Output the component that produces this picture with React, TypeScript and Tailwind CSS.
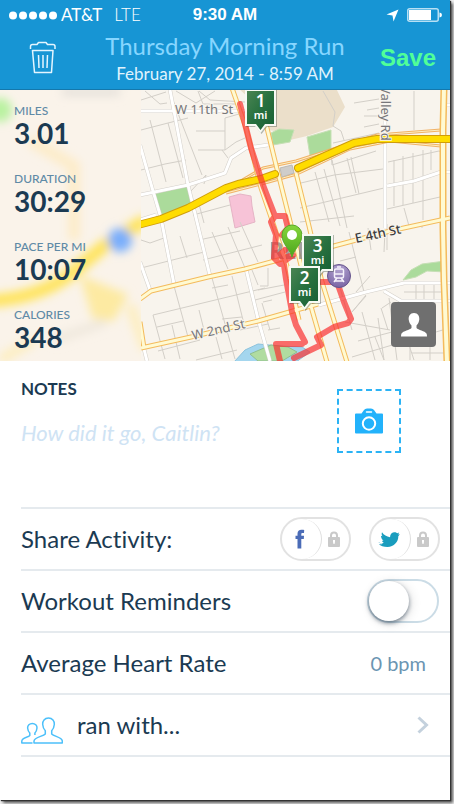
import React from 'react'

const stats = [
  { label: 'MILES', value: '3.01' },
  { label: 'DURATION', value: '30:29' },
  { label: 'PACE PER MI', value: '10:07' },
  { label: 'CALORIES', value: '348' },
]

// thin residential streets
const smallStreets =
  'M141 130L168 123L188 118M141 170L165 164L186 160M150 120L166 182M168 123L183 178M141 100L166 92M145 91L160 104L167 103M176 91L196 103L215 91M198 91L203 104L236 104M172 98L202 175M196 131H225M198 150H225V118M225 118L246 112M225 150L236 142L245 138M222 150L228 158M204 184L206 175L190 192M193 215L230 205M199 204L204 223M199 91L210 100L245 102' +
  'M141 240L150 243L164 238M141 268L204 252M180 236L187 258M212 232L228 269M199 240L240 231M203 260L262 245M228 227L245 268M240 222L258 262M212 288L228 285M153 315L265 288M174 286L188 337M153 315L165 359M157 327L183 321M158 351L200 340M172 325L180 359M199 310L204 330M212 278L235 359M232 276L244 324M222 319L242 317M258 290L284 285M255 300L285 292M262 303L270 330M263 302L272 300M252 270L258 285M260 286H268V268M196 360L237 350M216 337L222 359M240 330L268 324M268 330L280 328' +
  'M323 91L335 112L333 126L341 131L344 140M354 103L379 99M367 110L379 108M364 116L379 116M364 127L379 124M414 91V130M333 143L379 133M331 150L332 165L376 151M301 183L334 175L383 169M332 160L347 228M347 158L356 193M351 157L359 194M300 208L384 188M315 172L329 222M324 169L340 226M300 222L354 216M388 162L439 151L441 152M394 160V206M403 156V205M413 153V203M423 150V220M431 150V170M387 209L440 197M404 208L409 226M422 222V228M368 228L371 250M387 224V250M385 230L384 252' +
  'M349 232L364 292M330 252L352 330M340 261L356 257M356 292L370 276M366 295L352 312L366 296M382 308L391 302M381 308L388 330M389 298L397 360M345 322L390 330M358 341L392 332M352 357L446 329M375 337L384 360M404 330L414 360M410 346V360M430 346V360M412 353H444M416 283V302M424 283V318M434 283V301M404 292H444M378 318L384 360M362 312L375 360'

const whiteRoads =
  'M141 111H245M170 90L188 185L198 226L210 276M140 145L153 191L161 218L174 284M140 195L188 185L225 173L231 158L246 148L268 145M140 262L150 290M246 269L258 319L270 361M144 349L147 361M385 88V228M387 186L414 181L441 172H450M319 305L366 292L404 283H450M384 291L401 301H450M140 220L156 215M445 105H450'

const yellowRoads =
  'M232 88L246 128L261 188L274 226L287 266L299 320M266 124L276 165L290 221L312 310L327 362M296 173L309 226L322 282L347 362M140 299L151 291L208 277L245 269L282 259M330 247L390 231L450 218M141 348L191 337L258 321L300 309L318 304M140 322L144 348'

const sideRoads =
  'M222 192L263 168L296 161L377 135L441 130M226 193L265 183L297 174L350 149L390 141L441 146'

const highway = 'M138 225L161 219L188 208L226 188L238 184L261 179L275 174M298 168L327 155L354 143L377 139H394L450 139'

const route =
  'M240 104L251 148L263 185L275 216L285 216L288 228L282 235M275 216L271 222L276 235L274 258L280 264L293 255L283 258L286 279L292 312L296 325L305 342M276 258L285 250M321 282H337L344 302L351 319L348 323L334 327L317 337L321 345L294 358M302 344H276L280 361'

function MileMarker({ x, y, mile }: { x: number; y: number; mile: string }) {
  return (
    <g transform={`translate(${x} ${y})`}>
      <path d="M0 0H31V37H21L15.5 44L10 37H0Z" fill="#33433a" opacity=".35" transform="translate(1 1)" />
      <path d="M0 0H31V37H21L15.5 44L10 37H0Z" fill="#f7faf4" />
      <path d="M2 2H29V35H20L15.500 41L11 35H2Z" fill="url(#marker)" />
      <text x="15.500" y="18" textAnchor="middle" fontSize="17" fontWeight="600" fill="#fff">{mile}</text>
      <text x="15.500" y="30" textAnchor="middle" fontSize="11" fontWeight="600" fill="#fff">mi</text>
    </g>
  )
}

function RouteMap() {
  return (
    <svg
      viewBox="0 90 450 271"
      preserveAspectRatio="xMidYMid slice"
      className="absolute inset-0 h-full w-full bg-[#f8f4ed] font-['Noto_Sans',sans-serif]"
      role="img"
      aria-label="Route map"
    >
      <defs>
        <linearGradient id="marker" x1="0" y1="0" x2="1" y2="1">
          <stop offset="0" stopColor="#4a8452" />
          <stop offset=".5" stopColor="#27703f" />
          <stop offset="1" stopColor="#175f33" />
        </linearGradient>
        <linearGradient id="pin" x1="0" y1="0" x2="0" y2="1">
          <stop offset="0" stopColor="#86d63c" />
          <stop offset="1" stopColor="#4ba51c" />
        </linearGradient>
        <radialGradient id="station" cx=".5" cy=".2" r=".8">
          <stop offset="0" stopColor="#b3a4d0" />
          <stop offset="1" stopColor="#7a65a5" />
        </radialGradient>
      </defs>

      {/* areas */}
      <path d="M238 88H336L345 107L333 127L307 136L290 140L283 132L268 130L262 110Z" fill="#ebdfca" />
      <g fill="#abdb9b" stroke="#c6dfb5">
        <path d="M154 194L188 185L191 205L161 218Z" />
        <path d="M271 133L279 129L294 130L290 142L273 145Z" />
        <path d="M307 137L331 130V150L310 156Z" />
        <path d="M403 280L411 270L422 264L445 261V272L427 271L416 277Z" />
      </g>
      <path d="M229 197L240 194L251 196L252 206L255 222L235 228Z" fill="#f7c3d7" stroke="#e5b4c5" />
      <path d="M234 362L245 350L258 344L280 346L302 347L310 352L296 362Z" fill="#a4d6ee" stroke="#8cc2dc" />
      <path d="M250 354L271 345L288 347L297 352L282 361H258Z" fill="#b0dca0" stroke="#8fbf90" />

      {/* streets */}
      <g fill="none" strokeLinejoin="round">
        <path d={smallStreets} stroke="#d3cfc8" />
        <path d={whiteRoads} stroke="#d4d0ca" strokeWidth="4" />
        <path d={whiteRoads} stroke="#fff" strokeWidth="3" />
        <path d={sideRoads} stroke="#f1b267" strokeWidth="3" />
        <path d={sideRoads} stroke="#fdf0c4" strokeWidth="1" />
        <path d={yellowRoads} stroke="#f4bb5c" strokeWidth="5" />
        <path d="M444 88L443 130L443 228L444 280L447 362" stroke="#f4bb5c" strokeWidth="7" />
        <path d={yellowRoads} stroke="#fffad2" strokeWidth="3" />
        <path d="M444 88L443 130L443 228L444 280L447 362" stroke="#fffad2" strokeWidth="4" />
        <path d={highway} stroke="#cf9d0c" strokeWidth="8" strokeLinecap="round" />
        <path d={highway} stroke="#ffdc00" strokeWidth="6" strokeLinecap="round" />
      </g>
      <path d="M280 168L292 165L294 173L282 177Z" fill="#cfcdca" stroke="#bcb9b4" />

      {/* street names */}
      <g fontSize="13" fill="#77777a" stroke="#f8f4ed" strokeWidth="2" paintOrder="stroke">
        <text x="175" y="114">W 11th St</text>
        <text transform="translate(381 86) rotate(90)">Valley Rd</text>
        <text transform="translate(193 340) rotate(-13)">W 2nd St</text>
        <text transform="translate(356 243) rotate(-12)" fill="#3d3d3d" fontWeight="500">E 4th St</text>
      </g>
      <text x="269" y="259" fontSize="23" fontWeight="700" fill="#858585" opacity=".75">RENO</text>

      <path d={route} fill="none" stroke="#fa3030" strokeOpacity=".7" strokeWidth="6" strokeLinejoin="round" strokeLinecap="round" />

      {/* train station */}
      <circle cx="339" cy="276" r="11.500" fill="url(#station)" stroke="#66558c" />
      <g fill="none" stroke="#f6f2fc" strokeWidth="1.500">
        <rect x="334.500" y="269" width="9" height="9" rx="1.500" />
        <path d="M335 274H343M337 278L334 282M341 278L344 282M335 281H343M337 267H341" />
      </g>

      {/* start pin */}
      <path d="M292 257C290 249 282 244 282 235A10 10 0 0 1 302 235C302 244 294 249 292 257Z" fill="url(#pin)" stroke="#58a92a" />
      <circle cx="292" cy="235" r="5" fill="#fff" />

      <MileMarker x={245} y={89} mile="1" />
      <MileMarker x={302} y={234} mile="3" />
      <MileMarker x={289} y={266} mile="2" />
    </svg>
  )
}

function PanelBackdrop() {
  return (
    <svg viewBox="0 0 141 271" preserveAspectRatio="none" className="absolute inset-0 h-full w-full bg-[#faf3ea]" aria-hidden="true">
      <defs>
        <filter id="soft" x="-50%" y="-50%" width="200%" height="200%">
          <feGaussianBlur stdDeviation="5" />
        </filter>
      </defs>
      <g filter="url(#soft)" fill="none">
        <circle cx="0" cy="20" r="12" fill="#b9f2a0" />
        <path d="M62 2H120" stroke="#e2ded8" strokeWidth="7" />
        <path d="M30 50L74 76V150" stroke="#fdecc9" strokeWidth="12" />
        <path d="M-10 211Q40 208 72 183L104 156L146 130" stroke="#ffe45c" strokeWidth="13" />
        <path d="M84 190L124 206L112 228L95 226Z" fill="#fdeaa2" stroke="#fdeaa2" strokeWidth="6" />
        <path d="M54 250L106 232" stroke="#eee7dc" strokeWidth="8" />
        <path d="M0 270L34 250M130 215L146 260" stroke="#fdeec0" strokeWidth="10" />
        <circle cx="120" cy="150" r="12" fill="#79aefc" />
      </g>
    </svg>
  )
}

function LockIcon() {
  return (
    <svg viewBox="0 0 14 16" className="h-4 w-3.5" aria-hidden="true">
      <path d="M4 7V4.500a3 3 0 0 1 6 0V7" fill="none" stroke="#c9c9c9" strokeWidth="2" />
      <rect x="1" y="6" width="12" height="10" rx="1" fill="#c9c9c9" />
      <path d="M6 9h2v2l-.5 2h-1L6 11z" fill="#fff" />
    </svg>
  )
}

function ShareToggle({ name, children }: { name: string; children: React.ReactNode }) {
  return (
    <label className="flex h-11 w-[71px] cursor-pointer items-center rounded-full border-2 border-[#e2e2e2] bg-white">
      <input type="checkbox" className="sr-only" aria-label={name} />
      <span className="flex h-10 w-10 items-center justify-center rounded-full border-r border-[#dedede] pr-1">{children}</span>
      <span className="flex flex-1 items-center justify-center pr-1">
        <LockIcon />
      </span>
    </label>
  )
}

function App() {
  return (
    <div className="flex min-h-screen bg-[#f2f2f2] pr-1 pb-1 font-[Lato,sans-serif] text-[#1b3a52] [font-variant-ligatures:none]">
      <main className="flex w-full flex-col bg-white shadow-[1px_1px_1px_#333,3px_3px_3px_#555]">
        {/* Status bar and title */}
        <header className="h-[90px] border-b border-[#1478ac] bg-[#1795d4] text-white">
          <div className="grid h-[30px] grid-cols-3 items-center px-2">
            <div className="flex items-center text-lg leading-6">
              <svg viewBox="0 0 49 9" className="mr-1 h-[9px] w-[49px]" fill="#fff" aria-hidden="true">
                <circle cx="5" cy="4.500" r="4" />
                <circle cx="15" cy="4.500" r="4" />
                <circle cx="25" cy="4.500" r="4" />
                <circle cx="35" cy="4.500" r="4" />
                <circle cx="45" cy="4.500" r="4" />
              </svg>
              <span className="text-[17px]">AT&amp;T</span>
              <span className="ml-3 text-[17px] font-light">LTE</span>
            </div>
            <div className="text-center font-['Liberation_Sans',sans-serif] text-[17px] font-bold">9:30 AM</div>
            <div className="flex items-center justify-end gap-2">
              <svg viewBox="0 0 13 13" className="h-[13px] w-[13px]" aria-hidden="true">
                <path d="M12.500 .5L7.500 12.500L6.500 6.500L.5 5.500Z" fill="#fff" />
              </svg>
              <svg viewBox="0 0 35 14" className="h-3.5 w-[35px]" aria-hidden="true">
                <rect x=".75" y=".75" width="30.500" height="12.500" rx="2" fill="none" stroke="#b8e0f4" strokeWidth="1.500" />
                <rect x="2" y="2" width="22" height="10" fill="#fff" />
                <path d="M32.500 4.500a2.500 2.500 0 0 1 0 5z" fill="#fff" />
              </svg>
            </div>
          </div>
          <div className="flex items-center justify-between pr-3 pl-7">
            <button type="button" aria-label="Delete run" className="w-11">
              <svg viewBox="0 0 28 34" className="h-[34px] w-7" fill="none" stroke="#e4f5ff" strokeWidth="1.500" strokeLinejoin="round" aria-hidden="true">
                <path d="M2.500 8V5.500Q2.500 3.500 4.500 3.500H9L10.500 1.500H18L19.500 3.500H25Q27 3.500 27 5.500V8" />
                <path d="M4.500 9.500H25L23.500 31.500H6.500Z" />
                <path d="M10.500 14L11 27M15 14V27M19.500 14L19 27" />
              </svg>
            </button>
            <div className="text-center">
              <h1 className="text-2xl leading-8 text-[#86d6ff]">Thursday Morning Run</h1>
              <p className="text-[17px] leading-6 text-[#e0f3fd]">February 27, 2014 - 8:59 AM</p>
            </div>
            <button type="button" className="w-[60px] font-['Liberation_Sans',sans-serif] text-2xl font-bold text-[#50ff98]">
              Save
            </button>
          </div>
        </header>

        {/* Map and run stats */}
        <section className="relative h-[271px] overflow-hidden">
          <RouteMap />
          <div className="relative h-full w-[141px]">
            <PanelBackdrop />
            <dl className="relative flex flex-col gap-6 pt-[13px] pl-3.5">
              {stats.map((s) => (
                <div key={s.label}>
                  <dt className="text-[12px] leading-4 font-medium text-[#5f8aa6]">{s.label}</dt>
                  <dd className="text-[28px] leading-7 font-bold">{s.value}</dd>
                </div>
              ))}
            </dl>
          </div>
          <button
            type="button"
            aria-label="Show my location"
            className="absolute right-3.5 bottom-3.5 flex h-[45px] w-[45px] items-center justify-center rounded bg-[#6f6f6f]"
          >
            <svg viewBox="0 0 28 26" className="h-[26px] w-7" fill="#fff" aria-hidden="true">
              <path d="M14 1C10 1 8.500 4 8.700 7.500C9 10 10 12 11.500 13.500V16C10 18 3 19 1.500 21.500Q1 22.500 1 24.500H27Q27 22.500 26.500 21.500C25 19 18 18 16.500 16V13.500C18 12 19 10 19.300 7.500C19.500 4 18 1 14 1Z" />
            </svg>
          </button>
        </section>

        {/* Notes */}
        <section className="flex h-[146px] justify-between pl-[21px]">
          <div className="flex flex-1 flex-col pt-4">
            <label htmlFor="notes" className="text-[17px] leading-6 font-bold">NOTES</label>
            <textarea
              id="notes"
              placeholder="How did it go, Caitlin?"
              className="mt-5 h-16 w-full resize-none text-[22px] leading-6 italic outline-none placeholder:text-[#cfe3f4]"
            />
          </div>
          <button
            type="button"
            aria-label="Add photo"
            className="mt-7 mr-[49px] flex h-16 w-16 items-center justify-center border-2 border-dashed border-[#2bb3f5]"
          >
            <svg viewBox="0 0 28 26" className="h-[26px] w-7" aria-hidden="true">
              <path d="M1 5.500H6.500L9 2Q10 .5 12 .5H16Q18 .5 19 2L21.500 5.500H27Q28 5.500 28 6.500V24.500Q28 25.500 27 25.500H1Q0 25.500 0 24.500V6.500Q0 5.500 1 5.500Z" fill="#22b2fb" />
              <circle cx="14" cy="15.500" r="6.200" fill="none" stroke="#fff" strokeWidth="2" />
              <path d="M11.500 4H16.500" stroke="#fff" strokeWidth="1.500" strokeLinecap="round" />
            </svg>
          </button>
        </section>

        {/* Options */}
        <ul className="ml-[21px] border-y-2 border-[#e5eaee] text-2xl">
          <li className="flex h-[62px] items-center justify-between border-b-2 border-[#e5eaee] pr-2.5">
            <span>Share Activity:</span>
            <div className="flex gap-[18px]">
              <ShareToggle name="Share on Facebook">
                <svg viewBox="0 0 10 20" className="h-5 w-2.5" fill="#4b6cb7" aria-hidden="true">
                  <path d="M2.500 19.500V10H.5V6.800H2.500V4.800C2.500 2 4 .8 6.500 .8C8 .8 9.200 1 9.200 1L9 4H7.600C6.600 4 6.300 4.500 6.300 5.300V6.800H9L8.800 10H6.300V19.500Z" />
                </svg>
              </ShareToggle>
              <ShareToggle name="Share on Twitter">
                <svg viewBox="0 0 22 17" className="h-[17px] w-[22px]" fill="#1a9dbe" aria-hidden="true">
                  <path d="M.3 11C2.500 12.500 4.500 12.600 6 11.800C5 11.500 4.300 10.800 4 9.800L5.500 9.700C3.500 8.500 3 6 3 4.800L4.500 5.200C3.500 4 3.500 2.500 4 1.200C6 4 8.500 5.600 12 6.200C12.200 3.500 13.500 1.500 16 1.200C17.500 1 18.500 1.500 19.300 2.300L21.200 1.500L20.200 3.500L21.800 3.300L20.300 5.200C20.500 10.500 16 15.800 9.500 16C5.500 16 2.500 14.800 .8 13.200C2.500 13.500 4 13.200 5 12.700C3 12.700 1.200 12.200 .3 11Z" />
                </svg>
              </ShareToggle>
            </div>
          </li>
          <li className="flex h-[62px] items-center justify-between border-b-2 border-[#e5eaee] pr-[11px]">
            <label htmlFor="reminders">Workout Reminders</label>
            <label className="flex h-11 w-[72px] cursor-pointer items-center rounded-full border-2 border-[#cbdce6]">
              <input id="reminders" type="checkbox" className="sr-only" />
              <span className="h-10 w-10 rounded-full bg-white shadow-[0_2px_4px_rgba(40,60,80,0.6),2px_2px_12px_rgba(0,0,0,0.12)]" />
            </label>
          </li>
          <li className="flex h-[62px] items-center justify-between border-b-2 border-[#e5eaee] pr-6">
            <span>Average Heart Rate</span>
            <span className="text-xl text-[#6b95b2]">0 bpm</span>
          </li>
          <li>
            <a href="#friends" className="flex h-[60px] items-center pr-[21px]">
              <svg viewBox="0 0 42 28" className="mt-3 h-7 w-[42px]" fill="none" stroke="#4cc0fa" strokeWidth="1.500" strokeLinejoin="round" aria-hidden="true">
                <path d="M27.500 1C23.500 1 21.500 4 21.700 7.500C21.900 10 22.700 12.200 24.300 13.800V17C22 19.500 13.500 20 13 24V26H41.300V24C41 20 33 19.500 30.700 17V13.800C32.300 12.200 33.100 10 33.300 7.500C33.500 4 31.500 1 27.500 1Z" />
                <path d="M11.500 26H.8V24C1 20.500 7 20.500 8.800 18.500V16C7.500 14.800 6.800 13 6.600 11C6.500 8.500 8.500 6.500 11.300 6.500C14.200 6.500 16.200 8.500 16 11C15.800 13 15.200 14.800 13.900 16V18" />
              </svg>
              <span className="ml-3.5 flex-1">ran with...</span>
              <svg viewBox="0 0 12 18" className="h-[18px] w-3" fill="none" stroke="#c4d1dd" strokeWidth="3" aria-hidden="true">
                <path d="M1.500 1.500L9.500 9L1.500 16.500" />
              </svg>
            </a>
          </li>
        </ul>
      </main>
    </div>
  )
}

export default App
